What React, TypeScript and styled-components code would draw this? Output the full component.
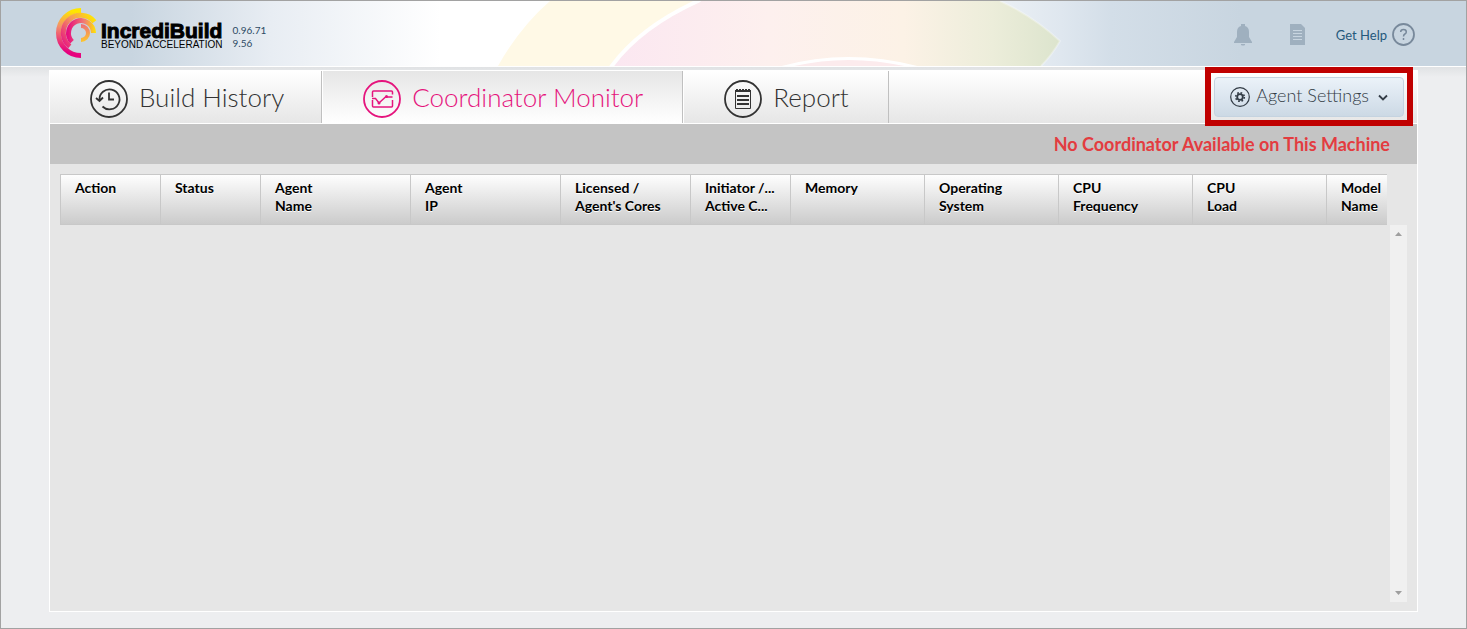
import React from "react";
import styled, { createGlobalStyle } from "styled-components";

const GlobalStyle = createGlobalStyle`
  *, *::before, *::after { box-sizing: border-box; }
  body { margin: 0; font-family: Lato, "Liberation Sans", sans-serif; }
  button { font-family: inherit; }
`;

const Page = styled.div`
  display: flex;
  flex-direction: column;
  min-height: 100vh;
  border: 1px solid #a2a2a2;
  background: #edeef0;
`;

const Header = styled.header`
  position: relative;
  display: flex;
  align-items: center;
  justify-content: space-between;
  height: 66px;
  padding: 0 51px 0 54px;
  border-bottom: 1px solid #fff;
  background: linear-gradient(to right, #c8d5e0 0, #c8d5e0 130px, #e8edf3 270px, #fff 440px, #fff 900px, #dfe7ef 1060px, #d3dee8 1110px, #c8d5e0 1240px);
  overflow: hidden;
`;

const Swoosh = styled.svg`
  position: absolute;
  left: 489px;
  top: 0;
`;

const Brand = styled.div`
  position: relative;
  display: flex;
  align-items: center;
`;

const BrandText = styled.div`
  padding-top: 5px;
  color: #000;
  font-family: "Liberation Sans", Arial, sans-serif;
`;

const BrandName = styled.div`
  font-size: 21px;
  font-weight: 700;
  line-height: 18px;
  -webkit-text-stroke: 1px #000;
`;

const Tagline = styled.div`
  font-size: 10px;
  line-height: 10px;
`;

const Version = styled.div`
  margin-left: 10px;
  padding-top: 6px;
  color: #2c4a63;
  font-size: 10px;
  line-height: 13px;
`;

const HeaderTools = styled.nav`
  position: relative;
  display: flex;
  align-items: center;
  padding-top: 2px;
`;

const IconButton = styled.button`
  display: flex;
  justify-content: center;
  width: 55px;
  padding: 0;
  border: 0;
  background: none;
`;

const HelpLink = styled.a`
  display: flex;
  align-items: center;
  gap: 5px;
  margin-left: 10px;
  color: #25597c;
  font-size: 13px;
  text-decoration: none;
`;

const Body = styled.div`
  display: flex;
  flex: 1;
  padding: 3px 48px 16px;
  background: linear-gradient(#e0e2e4, #edeef0 10px);
`;

const Panel = styled.main`
  display: flex;
  flex: 1;
  flex-direction: column;
  min-width: 0;
  border: 1px solid #fff;
  background: #e6e6e6;
`;

const TabBar = styled.nav`
  display: flex;
  align-items: stretch;
  height: 53px;
  border-bottom: 1px solid #fff;
  background: linear-gradient(#fff, #e6e6e6);
`;

const Tab = styled.button<{ $active?: boolean }>`
  display: flex;
  align-items: center;
  gap: 11px;
  padding: 4px 39px 0 40px;
  border: 0;
  border-right: 1px solid #c0c0c0;
  background: ${p => (p.$active ? "linear-gradient(#e6e6e6, #fff)" : "transparent")};
  color: ${p => (p.$active ? "#e5147d" : "#333")};
  font-size: 26px;
  font-weight: 300;
  white-space: nowrap;

  &:first-child { padding-right: 37px; }
  & + & { border-left: 1px solid #fff; }
`;

const ButtonLabel = styled.span`
  padding-bottom: 4px;
`;

const SettingsFrame = styled.div`
  position: relative;
  z-index: 1;
  align-self: center;
  margin: 0 13px 0 auto;

  &::after {
    content: "";
    position: absolute;
    inset: -10px -9px -9px;
    border: 6px solid #c00000;
    pointer-events: none;
  }
`;

const SettingsButton = styled.button`
  display: flex;
  align-items: center;
  gap: 6px;
  height: 40px;
  padding: 0 15px;
  border: 1px solid #c5d3e0;
  border-radius: 4px;
  background: linear-gradient(#ebf2f9, #ccd9e5);
  color: #333c46;
  font-size: 18px;
  font-weight: 300;
  white-space: nowrap;
`;

const StatusBar = styled.div`
  padding-right: 27px;
  background: #c4c4c4;
  color: #e33c40;
  font-size: 18px;
  font-weight: 700;
  line-height: 40px;
  text-align: right;
`;

const GridArea = styled.section`
  display: flex;
  flex: 1;
  flex-direction: column;
  padding: 10px 10px 9px;
`;

const HeadClip = styled.div`
  margin-right: 20px;
  overflow: hidden;
`;

const Table = styled.table`
  width: 1401px;
  border-collapse: separate;
  border-spacing: 0;
  table-layout: fixed;
  background: linear-gradient(#fff, #cacaca);
`;

const HeadCell = styled.th<{ $width: number }>`
  width: ${p => p.$width}px;
  height: 51px;
  padding: 4px 14px 0;
  border: solid #c8c8c8;
  border-width: 1px 0 1px 1px;
  color: #000;
  font-size: 14px;
  font-weight: 700;
  line-height: 18px;
  text-align: left;
  text-shadow: 0 1px 0 #fff;
  vertical-align: top;
`;

const CellLine = styled.span`
  display: block;
  white-space: nowrap;
`;

const ScrollTrack = styled.div`
  display: flex;
  flex: 1;
  flex-direction: column;
  align-items: center;
  justify-content: space-between;
  align-self: flex-end;
  width: 17px;
  padding: 7px 0;
  background: #f0f0f0;
`;

const columns: { lines: string[]; width: number }[] = [
  { lines: ["Action"], width: 100 },
  { lines: ["Status"], width: 100 },
  { lines: ["Agent", "Name"], width: 150 },
  { lines: ["Agent", "IP"], width: 150 },
  { lines: ["Licensed /", "Agent's Cores"], width: 130 },
  { lines: ["Initiator /...", "Active C..."], width: 100 },
  { lines: ["Memory"], width: 134 },
  { lines: ["Operating", "System"], width: 134 },
  { lines: ["CPU", "Frequency"], width: 134 },
  { lines: ["CPU", "Load"], width: 134 },
  { lines: ["Model", "Name"], width: 135 },
];

const Logo = () => (
  <svg width="46" height="52" viewBox="0 0 46 52" fill="none" strokeWidth="5" aria-hidden="true">
    <defs>
      <linearGradient id="ring1" gradientUnits="userSpaceOnUse" x1="26" y1="0" x2="14" y2="50">
        <stop offset="0.1" stopColor="#ffe600" />
        <stop offset="0.45" stopColor="#f3906b" />
        <stop offset="0.9" stopColor="#e6007e" />
      </linearGradient>
      <linearGradient id="ring2" gradientUnits="userSpaceOnUse" x1="41" y1="12" x2="8" y2="34">
        <stop offset="0" stopColor="#ffe600" />
        <stop offset="0.5" stopColor="#f59a5c" />
        <stop offset="1" stopColor="#e8207e" />
      </linearGradient>
      <linearGradient id="ring3" gradientUnits="userSpaceOnUse" x1="41" y1="24" x2="13" y2="24">
        <stop offset="0" stopColor="#ffe600" />
        <stop offset="0.4" stopColor="#f28070" />
        <stop offset="1" stopColor="#e6107e" />
      </linearGradient>
      <linearGradient id="ring4" gradientUnits="userSpaceOnUse" x1="26" y1="16" x2="28" y2="34">
        <stop offset="0" stopColor="#ee6a7c" />
        <stop offset="1" stopColor="#fdc82a" />
      </linearGradient>
    </defs>
    <path d="M26 2.500A22.500 22.500 0 0 0 26 47.500" stroke="url(#ring1)" />
    <path d="M39.400 13.800A17.500 17.500 0 1 0 14.800 38.400" stroke="url(#ring2)" />
    <path d="M38.500 25A12.500 12.500 0 1 0 17 33.800" stroke="url(#ring3)" />
    <path d="M26 18A7 7 0 0 1 26 32" stroke="url(#ring4)" strokeWidth="4" />
  </svg>
);

const HistoryIcon = () => (
  <svg width="38" height="38" viewBox="0 0 38 38" fill="none" stroke="currentColor" aria-hidden="true">
    <circle cx="19" cy="19" r="18" strokeWidth="1.800" />
    <path d="M9.500 20A10 10 0 1 1 12.500 26.500M6 18l3.500 3 3.500-3.500M19 12.500v7h5" strokeWidth="1.800" />
  </svg>
);

const MonitorIcon = () => (
  <svg width="38" height="38" viewBox="0 0 38 38" fill="none" stroke="currentColor" aria-hidden="true">
    <circle cx="19" cy="19" r="18" strokeWidth="1.800" />
    <path d="M9.500 17v-5q0-1 1-1h18q1 0 1 1v2.500M29.500 20v6q0 1-1 1h-18q-1 0-1-1v-6M9 18.500h3.500l3.500 4.500 6.500-6h7" strokeWidth="1.500" />
    <circle cx="16" cy="23" r="1.500" fill="currentColor" stroke="none" />
    <circle cx="23.500" cy="16.500" r="1.500" fill="currentColor" stroke="none" />
  </svg>
);

const ReportIcon = () => (
  <svg width="38" height="38" viewBox="0 0 38 38" fill="none" stroke="currentColor" aria-hidden="true">
    <circle cx="19" cy="19" r="18" strokeWidth="1.800" />
    <path d="M11.500 10.500V28.500H26.500V10.500" />
    <path d="M11 11h16" strokeWidth="2" />
    <path d="M12 9.500h15" strokeDasharray="2 1" />
    <path d="M13 16h12M13 20h12M13 24h12" strokeWidth="2" />
  </svg>
);

const GearIcon = () => (
  <svg width="20" height="20" viewBox="0 0 20 20" fill="none" stroke="currentColor" aria-hidden="true">
    <circle cx="10" cy="10" r="9.300" strokeWidth="1.200" />
    <circle cx="10" cy="10" r="2.800" strokeWidth="1.800" />
    <circle cx="10" cy="10" r="4.300" strokeWidth="1.600" strokeDasharray="1.690 1.690" />
  </svg>
);

export default function App() {
  return (
    <Page>
      <GlobalStyle />
      <Header>
        <Swoosh width="580" height="65" viewBox="0 0 580 65" aria-hidden="true">
          <defs>
            <linearGradient id="pink" x1="0" x2="1">
              <stop offset="0" stopColor="#fbe7f1" />
              <stop offset="0.35" stopColor="#fdf0ee" />
              <stop offset="0.65" stopColor="#fcf2e6" />
              <stop offset="0.85" stopColor="#ecedda" />
              <stop offset="1" stopColor="#dce4cd" />
            </linearGradient>
          </defs>
          <path d="M60 0H211Q147 26 123 65H8Q30 26 60 0Z" fill="#fff9e6" />
          <path d="M211 0H510Q543 15 570 40Q562 54 551 65H123Q147 26 211 0Z" fill="url(#pink)" />
          <path d="M210 -1Q150 26 121 66" fill="none" stroke="#fff" strokeWidth="4" />
          <path d="M510 0Q543 15 570 40Q562 54 551 65" fill="none" stroke="#fff" strokeOpacity="0.300" strokeWidth="2" />
          <path d="M290 67Q358 48 429 67Z" fill="#fcebed" stroke="#fff" strokeWidth="3" />
        </Swoosh>
        <Brand>
          <Logo />
          <BrandText>
            <BrandName>IncrediBuild</BrandName>
            <Tagline>BEYOND ACCELERATION</Tagline>
          </BrandText>
          <Version>
            <div>0.96.71</div>
            <div>9.56</div>
          </Version>
        </Brand>
        <HeaderTools>
          <IconButton aria-label="Notifications">
            <svg width="20" height="22" viewBox="0 0 20 22" fill="#9fb0bf" aria-hidden="true">
              <path d="M8 0h4v2q4 1 4 6v5l3 5v1H1v-1l3-5V8q0-5 4-6ZM8 20h4v1q-2 1-4 0Z" />
            </svg>
          </IconButton>
          <IconButton aria-label="Log">
            <svg width="16" height="21" viewBox="0 0 16 21" aria-hidden="true">
              <path d="M0 0h11l4 4v17H0Z" fill="#9fb0bf" />
              <path d="M3 6.500h9M3 9.500h9M3 12.500h9M3 15.500h9" stroke="#c8d5e0" />
            </svg>
          </IconButton>
          <HelpLink href="#help">
            Get Help
            <svg width="23" height="23" viewBox="0 0 23 23" fill="none" stroke="#78899b" aria-hidden="true">
              <circle cx="11.500" cy="11.500" r="10.500" strokeWidth="1.800" />
              <path d="M8.700 9q0-2.500 2.800-2.500T14.300 9q0 1.200-1.400 2T11.500 13.500M11.500 15v2" strokeWidth="1.500" />
            </svg>
          </HelpLink>
        </HeaderTools>
      </Header>
      <Body>
        <Panel>
          <TabBar>
            <Tab><HistoryIcon /><ButtonLabel>Build History</ButtonLabel></Tab>
            <Tab $active><MonitorIcon /><ButtonLabel>Coordinator Monitor</ButtonLabel></Tab>
            <Tab><ReportIcon /><ButtonLabel>Report</ButtonLabel></Tab>
            <SettingsFrame>
              <SettingsButton aria-haspopup="menu">
                <GearIcon />
                <ButtonLabel>Agent Settings</ButtonLabel>
                <svg width="13" height="10" viewBox="0 0 13 10" fill="none" stroke="currentColor" strokeWidth="1.800" aria-hidden="true"><path d="M4 3.500l4 4 4-4" /></svg>
              </SettingsButton>
            </SettingsFrame>
          </TabBar>
          <StatusBar role="status">No Coordinator Available on This Machine</StatusBar>
          <GridArea>
            <HeadClip>
              <Table>
                <thead>
                  <tr>
                    {columns.map(({ lines, width }) => (
                      <HeadCell key={lines.join(" ")} $width={width} scope="col">
                        {lines.map(line => <CellLine key={line}>{line}</CellLine>)}
                      </HeadCell>
                    ))}
                  </tr>
                </thead>
              </Table>
            </HeadClip>
            <ScrollTrack>
              <svg width="7" height="4" viewBox="0 0 7 4" fill="#9f9f9f" aria-hidden="true"><path d="M0 4L3.500 0L7 4Z" /></svg>
              <svg width="7" height="4" viewBox="0 0 7 4" fill="#9f9f9f" aria-hidden="true"><path d="M0 0L3.500 4L7 0Z" /></svg>
            </ScrollTrack>
          </GridArea>
        </Panel>
      </Body>
    </Page>
  );
}
